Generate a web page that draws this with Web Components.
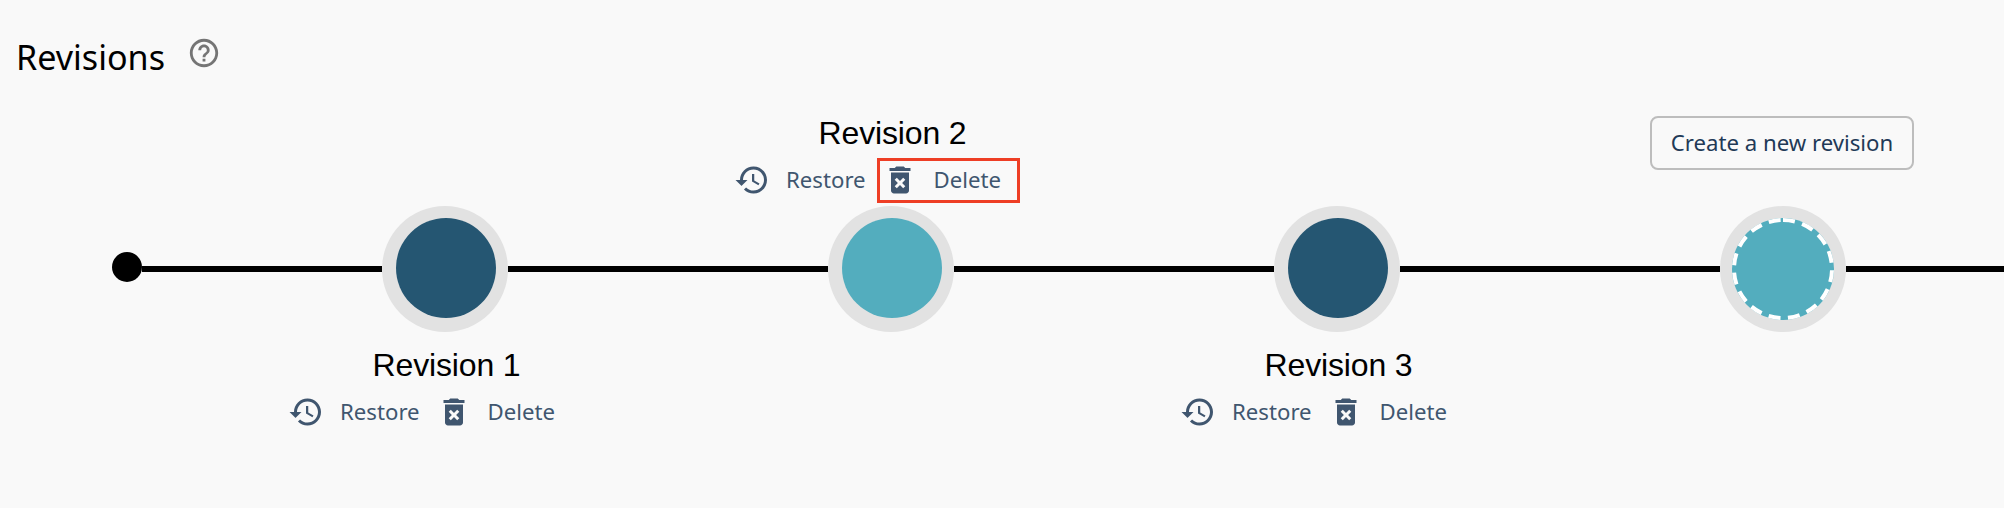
<!DOCTYPE html>
<html lang="en">
<head>
<meta charset="utf-8">
<title>Revisions</title>
<style>
html, body { margin: 0; height: 100%; overflow: hidden; background: #f9f9f9; }
body { font-family: "Noto Sans", sans-serif; color: #000; }
</style>
</head>
<body>
<revisions-panel></revisions-panel>
<script>
const define = (name, html) => {
  const t = document.createElement('template');
  t.innerHTML = html;
  customElements.define(name, class extends HTMLElement {
    constructor() {
      super();
      this.attachShadow({ mode: 'open' }).append(t.content.cloneNode(true));
    }
  });
};

const icons = {
  help: 'M11 18h2v-2h-2v2zm1-16C6.48 2 2 6.48 2 12s4.48 10 10 10 10-4.48 10-10S17.52 2 12 2zm0 18c-4.41 0-8-3.59-8-8s3.59-8 8-8 8 3.59 8 8-3.59 8-8 8zm0-14c-2.21 0-4 1.79-4 4h2c0-1.1.9-2 2-2s2 .9 2 2c0 2-3 1.75-3 5h2c0-2.25 3-2.5 3-5 0-2.21-1.79-4-4-4z',
  restore: 'M13 3c-4.97 0-9 4.03-9 9H1l3.89 3.89.07.14L9 12H6c0-3.87 3.13-7 7-7s7 3.13 7 7-3.13 7-7 7c-1.93 0-3.68-.79-4.94-2.06l-1.42 1.42C8.27 19.99 10.51 21 13 21c4.97 0 9-4.03 9-9s-4.03-9-9-9zm-1 5v5l4.28 2.54.72-1.21-3.5-2.08V8H12z',
  remove: 'M6 19c0 1.1.9 2 2 2h8c1.1 0 2-.9 2-2V7H6v12zm2.46-7.12l1.41-1.41L12 12.59l2.12-2.12 1.41 1.41L13.41 14l2.12 2.12-1.41 1.41L12 15.41l-2.12 2.12-1.41-1.41L10.59 14l-2.13-2.12zM15.5 4l-1-1h-5l-1 1H5v2h14V4z'
};

customElements.define('ui-icon', class extends HTMLElement {
  constructor() { super(); this.attachShadow({ mode: 'open' }); }
  connectedCallback() {
    this.shadowRoot.innerHTML = `<style>
      :host { display: block; flex: none; width: 36px; height: 36px; }
      svg { display: block; width: 100%; height: 100%; fill: currentColor; }
    </style><svg viewBox="0 0 24 24" aria-hidden="true"><path d="${icons[this.getAttribute('name')]}"/></svg>`;
  }
});

define('panel-header', `<style>
  :host { display: flex; height: 100px; padding-left: 16px; box-sizing: border-box; }
  h1 { margin: 34px 0 0; font-size: 34.1px; line-height: 46px; font-weight: 400; }
  ui-icon { width: 34px; height: 34px; margin: 36px 0 0 22.5px; color: #757575; }
</style><h1><slot></slot></h1><ui-icon name="help"></ui-icon>`);

define('revision-action', `<style>
  :host { display: flex; align-items: center; gap: 16px; position: relative; height: 36px;
    color: #40566f; font-size: 22.2px; line-height: 36px; white-space: nowrap; }
  :host([highlight])::after { content: ""; position: absolute; left: -5px; top: -4px;
    width: 143px; height: 45px; box-sizing: border-box; border: 3px solid #ee3e25; z-index: 2; }
</style><slot name="icon"></slot><span><slot></slot></span>`);

define('revision-details', `<style>
  :host { display: block; }
  h2 { margin: 0 0 11px; padding-left: 3px; font: 400 32px/36px "Liberation Sans", Arial, sans-serif;
    letter-spacing: -.15px; text-align: center; }
  .actions { display: flex; gap: 16px; padding-left: 66px; }
</style><h2><slot></slot></h2><div class="actions"><slot name="action"></slot></div>`);

define('create-button', `<style>
  :host { display: block; }
  button { display: block; width: 264px; height: 54px; margin: 0 0 0 90px; padding: 0; box-sizing: border-box;
    border: 2px solid #bdbdbd; border-radius: 8px; background: transparent; color: #1f3a57;
    font: 22.2px/30px "Noto Sans", sans-serif; white-space: nowrap; }
</style><button><slot></slot></button>`);

define('timeline-start', `<style>
  :host { display: grid; grid-template-rows: 106px 126px; width: 222px; flex: none; }
  .track { grid-row: 2; display: flex; align-items: center; padding-left: 112px; }
  i { width: 30px; height: 30px; border-radius: 50%; background: #000; margin-bottom: 4px; }
  b { flex: 1; height: 6px; background: #000; }
</style><div class="track"><i></i><b></b></div>`);

define('timeline-node', `<style>
  :host { display: grid; grid-template-rows: 106px 126px 1fr; width: 446px; flex: none; --fill: #255672; }
  :host([tone="light"]) { --fill: #53adbe; }
  .top { display: flex; flex-direction: column; justify-content: flex-end; padding-bottom: 8px; }
  .bottom { padding-top: 15px; }
  .track { display: flex; align-items: center; }
  b { flex: 1; height: 6px; background: #000; }
  .ring { width: 126px; height: 126px; border-radius: 50%; background: #e2e2e2; flex: none; }
  svg { display: block; }
  .fill { fill: var(--fill); }
  .draft { display: none; }
  :host([draft]) .draft { display: block; }
  :host([draft]) .saved { display: none; }
</style>
<div class="top"><slot name="top"></slot></div>
<div class="track"><b></b><div class="ring"><svg width="126" height="126" viewBox="0 0 126 126">
  <circle class="fill saved" cx="64" cy="62" r="50"/>
  <g class="draft"><circle class="fill" cx="63" cy="63" r="51"/>
  <circle cx="63" cy="63" r="49" fill="none" stroke="#fff" stroke-width="4" stroke-dasharray="12 7.53" transform="rotate(-90 63 63)"/></g>
</svg></div><b></b></div>
<div class="bottom"><slot name="bottom"></slot></div>`);

const details = (slot, n, hl = '') => `<revision-details slot="${slot}">Revision ${n}
  <revision-action slot="action"><ui-icon slot="icon" name="restore"></ui-icon>Restore</revision-action>
  <revision-action slot="action" ${hl}><ui-icon slot="icon" name="remove"></ui-icon>Delete</revision-action>
</revision-details>`;

define('revisions-panel', `<style>
  :host { display: block; width: 100%; height: 508px; overflow: hidden; }
  .timeline { display: flex; height: 408px; }
  create-button { margin-bottom: 28px; }
</style>
<panel-header>Revisions</panel-header>
<div class="timeline">
  <timeline-start></timeline-start>
  <timeline-node>${details('bottom', 1)}</timeline-node>
  <timeline-node tone="light">${details('top', 2, 'highlight')}</timeline-node>
  <timeline-node>${details('bottom', 3)}</timeline-node>
  <timeline-node tone="light" draft><create-button slot="top">Create a new revision</create-button></timeline-node>
</div>`);
</script>
</body>
</html>
